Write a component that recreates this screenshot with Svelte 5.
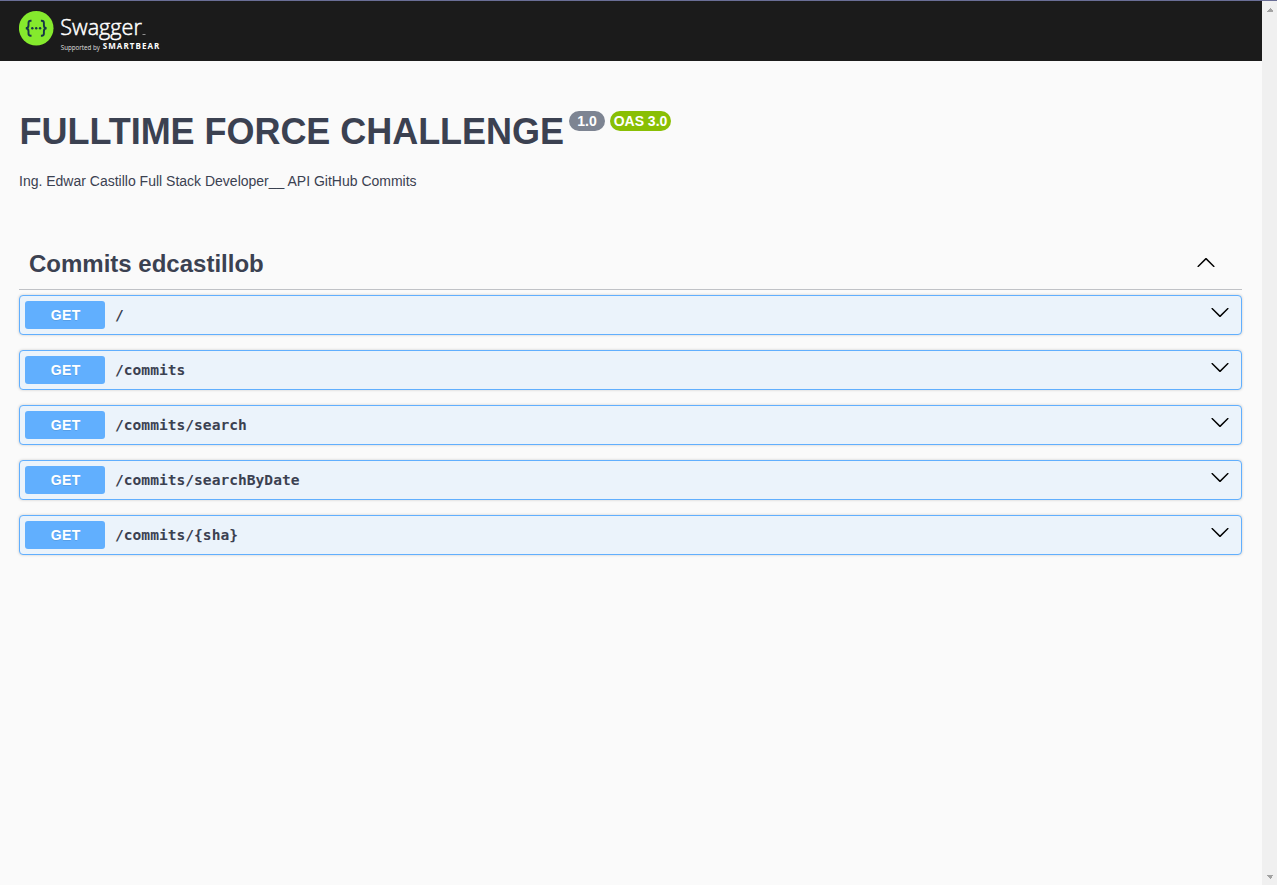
<script>
  const operations = ['/', '/commits', '/commits/search', '/commits/searchByDate', '/commits/{sha}'];
</script>

<div class="window">
  <div class="page">
    <header class="topbar">
      <svg class="logo" width="150" height="50" viewBox="0 0 150 50" role="img" aria-label="Swagger">
        <circle cx="17.2" cy="22.2" r="17.3" fill="#85ea2d" />
        <g fill="none" stroke="#173647" stroke-width="1.9">
          <path d="M12.500 14.700h-.8q-2.200 0-2.200 2.200v2.300q0 2.900-2.700 3q2.700 .1 2.700 3v2.300q0 2.200 2.200 2.200h.8" />
          <path d="M21.900 14.700h.8q2.200 0 2.200 2.200v2.300q0 2.900 2.700 3q-2.700 .1-2.700 3v2.300q0 2.200-2.200 2.200h-.8" />
        </g>
        <g fill="#173647">
          <circle cx="13.300" cy="22.200" r="1.200" />
          <circle cx="17.200" cy="22.200" r="1.200" />
          <circle cx="21.100" cy="22.200" r="1.200" />
        </g>
        <g fill="#fff" font-family="'Open Sans', sans-serif">
          <text x="41.300" y="29.300" font-size="22.500" font-weight="300" stroke="#fff" stroke-width=".5" textLength="81.500" lengthAdjust="spacingAndGlyphs">Swagger</text>
          <rect x="123.500" y="28" width="3" height="1" opacity=".5" />
          <text x="41.800" y="43.500" font-size="6.500" textLength="39" lengthAdjust="spacingAndGlyphs" opacity=".85">Supported by</text>
          <text x="83.800" y="43.300" font-size="8" font-weight="700" textLength="56.500" lengthAdjust="spacing">SMARTBEAR</text>
        </g>
      </svg>
    </header>

    <main>
      <section class="info">
        <h1>FULLTIME FORCE CHALLENGE</h1>
        <span class="badge version">1.0</span>
        <span class="badge oas">OAS 3.0</span>
      </section>
      <p>Ing. Edwar Castillo Full Stack Developer__ API GitHub Commits</p>

      <h2>
        <span>Commits edcastillob</span>
        <svg width="20" height="20" viewBox="0 0 20 20"><path d="M17.418 14.908c.272.268.709.268.979 0s.271-.701 0-.969l-7.908-7.830c-.27-.268-.707-.268-.979 0l-7.908 7.830c-.27.268-.27.701 0 .969.271.268.709.268.979 0L10 7.767z" /></svg>
      </h2>

      <div class="operations">
        {#each operations as path}
          <div class="operation">
            <span class="method">GET</span>
            <span class="path">{path}</span>
            <svg width="20" height="20" viewBox="0 0 20 20"><path d="M17.418 6.109c.272-.268.709-.268.979 0s.271.701 0 .969l-7.908 7.830c-.27.268-.707.268-.979 0l-7.908-7.830c-.27-.268-.27-.701 0-.969.271-.268.709-.268.979 0L10 13.250z" /></svg>
          </div>
        {/each}
      </div>
    </main>
  </div>

  <div class="scrollbar">
    <svg width="6" height="4" viewBox="0 0 6 4" shape-rendering="crispEdges"><path d="M0 4V3h1V2h1V1h1V0h1v1h1v1h1v2z" /></svg>
    <svg width="6" height="4" viewBox="0 0 6 4" shape-rendering="crispEdges"><path d="M0 0v1h1v1h1v1h1v1h1V3h1V1h1V0z" /></svg>
  </div>
</div>

<style>
  .window {
    box-sizing: border-box;
    display: flex;
    height: 885px;
    overflow: hidden;
    border-top: 1px solid #6a6e96;
    background: #fafafa;
    color: #3b4151;
    font-family: Arial, "Liberation Sans", sans-serif;
  }

  .page {
    flex: 1;
    min-width: 0;
  }

  .topbar {
    height: 60px;
    padding: 5px 0 0 19px;
    box-sizing: border-box;
    background: #1b1b1b;
  }

  .logo {
    display: block;
  }

  main {
    padding: 50px 20px 0 19px;
  }

  .info {
    display: flex;
    align-items: flex-start;
    height: 41px;
  }

  h1 {
    box-sizing: border-box;
    width: 545px;
    margin: 0 5px 0 0;
    padding-left: 0.6px;
    font-size: 36px;
    line-height: 41px;
    letter-spacing: -0.04px;
    white-space: nowrap;
  }

  .badge {
    box-sizing: border-box;
    height: 20px;
    margin-right: 5px;
    border-radius: 57px;
    color: #fff;
    font-size: 14px;
    font-weight: 700;
    line-height: 20px;
    text-align: center;
    white-space: nowrap;
  }

  .version {
    width: 36px;
    background: #7d8492;
  }

  .oas {
    width: 61px;
    background: #89bf04;
  }

  p {
    margin: 20px 0 0;
    font-size: 14px;
    line-height: 18px;
  }

  h2 {
    display: flex;
    align-items: center;
    justify-content: space-between;
    box-sizing: border-box;
    height: 52px;
    margin: 48px 0 5px;
    padding: 0 26px 0 10px;
    border-bottom: 1px solid rgba(59, 65, 81, 0.3);
    font-size: 24px;
    line-height: 28px;
  }

  h2 svg {
    margin-bottom: 3px;
  }

  .operations {
    display: flex;
    flex-direction: column;
    gap: 15px;
  }

  .operation {
    box-sizing: border-box;
    display: flex;
    align-items: center;
    height: 40px;
    padding: 0 11px 0 5px;
    border: 1px solid #61affe;
    border-radius: 4px;
    background: #ebf3fb;
    box-shadow: 0 0 3px rgba(0, 0, 0, 0.19);
  }

  .method {
    box-sizing: border-box;
    width: 80px;
    padding-left: 1.5px;
    border-radius: 3px;
    background: #61affe;
    color: #fff;
    font-size: 14px;
    font-weight: 700;
    letter-spacing: 0.4px;
    line-height: 28px;
    text-align: center;
    text-shadow: 0 1px 0 rgba(0, 0, 0, 0.1);
  }

  .path {
    flex: 1;
    padding-left: 10px;
    font: 700 14.6px/20px "DejaVu Sans Mono", monospace;
  }

  .operation svg {
    margin-bottom: 6px;
  }

  .scrollbar {
    display: flex;
    flex-direction: column;
    align-items: center;
    justify-content: space-between;
    box-sizing: border-box;
    width: 15px;
    padding: 7px 0 6px;
    background: #f0f0f0;
    fill: #a3a3a3;
  }
</style>
